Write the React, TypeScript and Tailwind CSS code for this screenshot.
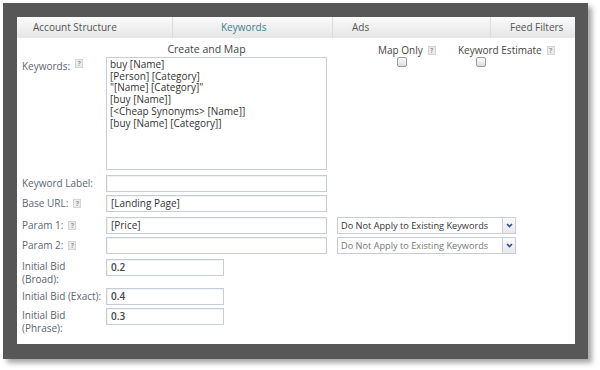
import React from "react";

const font = { fontFamily: '"Open Sans", "Liberation Sans", sans-serif' };

function Help() {
  return (
    <span className="ml-[5px] inline-flex h-[9px] w-[8px] items-center justify-center border border-[#d4d4d4] bg-[#ececec] text-[7px] font-bold leading-none text-[#999]">
      ?
    </span>
  );
}

function Check() {
  return (
    <span className="block h-[10px] w-[10px] rounded-[2px] border border-[#9a9a9a] bg-gradient-to-b from-[#ffffff] to-[#dcdcdc]" />
  );
}

function Field({ value, w = "w-[221px]", bold = false }: { value?: string; w?: string; bold?: boolean }) {
  return (
    <div
      className={`flex h-[17px] ${w} items-center border border-[#c6ccd8] bg-white px-[4px] shadow-[inset_1px_1px_1px_rgba(0,0,0,0.06)] ${
        bold ? "font-semibold text-[#444]" : "text-[#333]"
      }`}
    >
      {value}
    </div>
  );
}

function Select({ faded = false }: { faded?: boolean }) {
  return (
    <div className="ml-[10px] flex h-[17px] w-[179px] border border-[#c6ccd8] bg-white">
      <div
        className={`flex flex-1 items-center overflow-hidden whitespace-nowrap px-[3px] text-[9.2px] ${
          faded ? "text-[#777]" : "text-[#333]"
        }`}
      >
        Do Not Apply to Existing Keywords
      </div>
      <div className="flex w-[13px] items-center justify-center border-l border-[#c6ccd8] bg-gradient-to-b from-[#fafafa] to-[#e8e8e8]">
        <svg width="7" height="5" viewBox="0 0 7 5">
          <path d="M1 1l2.5 2.5L6 1" stroke="#2f4f8f" strokeWidth="1.6" fill="none" />
        </svg>
      </div>
    </div>
  );
}

function Label({ children }: { children: React.ReactNode }) {
  return <div className="flex w-[84px] shrink-0 items-center whitespace-nowrap text-[#5d6570]">{children}</div>;
}

export default function App() {
  const tabs = [
    { name: "Account Structure", w: "w-[155px]", pl: "pl-[16px]" },
    { name: "Keywords", w: "w-[160px]", pl: "pl-[48px]", active: true },
    { name: "Ads", w: "w-[158px]", pl: "pl-[19px]" },
    { name: "Feed Filters", w: "flex-1", pl: "pl-[19px]" },
  ];

  return (
    <div className="h-[370px] w-[600px] bg-white pl-[3px] pt-[3px] text-[10px]" style={font}>
      <div className="h-[356px] w-[585px] bg-[#575757] p-[14px] shadow-[4px_4px_5px_rgba(0,0,0,0.35)]">
        <div className="flex h-[327px] w-[558px] flex-col bg-white">
          <div className="flex h-[21px] bg-gradient-to-b from-[#fbfbfb] to-[#e5e5e5] text-[10px]">
            {tabs.map((t, i) => (
              <div
                key={t.name}
                className={`flex items-center whitespace-nowrap ${t.w} ${t.pl} ${i > 0 ? "border-l border-[#dcdcdc]" : ""} ${
                  t.active ? "text-[#3f7e8e]" : "text-[#555]"
                }`}
              >
                {t.name}
              </div>
            ))}
          </div>

          <div className="flex flex-col pl-[5px] pt-[5px]">
            <div className="flex items-start">
              <div className="flex flex-col">
                <div className="flex h-[14px] items-center">
                  <div className="w-[84px]" />
                  <div className="w-[221px] pr-[20px] text-center text-[10.5px] text-[#444]">Create and Map</div>
                </div>
                <div className="flex">
                  <div className="flex w-[84px] items-start pt-[2px] text-[#5d6570]">
                    Keywords:
                    <Help />
                  </div>
                  <div className="h-[113px] w-[221px] border border-[#c6ccd8] px-[3px] py-[1px] leading-[11.7px] text-[#333]">
                    buy [Name]
                    <br />
                    [Person] [Category]
                    <br />
                    "[Name] [Category]"
                    <br />
                    [buy [Name]]
                    <br />
                    [&lt;Cheap Synonyms&gt; [Name]]
                    <br />
                    [buy [Name] [Category]]
                  </div>
                </div>
              </div>
              <div className="ml-[51px] flex w-[80px] flex-col items-start text-[#444]">
                <div className="flex h-[14px] items-center">
                  Map Only
                  <Help />
                </div>
                <div className="ml-[19px]">
                  <Check />
                </div>
              </div>
              <div className="flex flex-col items-start text-[#444]">
                <div className="flex h-[14px] items-center">
                  Keyword Estimate
                  <Help />
                </div>
                <div className="ml-[18px]">
                  <Check />
                </div>
              </div>
            </div>

            <div className="mt-[5px] flex">
              <Label>Keyword Label:</Label>
              <Field />
            </div>
            <div className="mt-[3px] flex">
              <Label>
                Base URL:
                <Help />
              </Label>
              <Field value="[Landing Page]" />
            </div>
            <div className="mt-[5px] flex">
              <Label>
                Param 1:
                <Help />
              </Label>
              <Field value="[Price]" />
              <Select />
            </div>
            <div className="mt-[3px] flex">
              <Label>
                Param 2:
                <Help />
              </Label>
              <Field />
              <Select faded />
            </div>
            <div className="mt-[5px] flex items-start">
              <div className="w-[84px] shrink-0 pt-[1px] leading-[13px] text-[#5d6570]">
                Initial Bid
                <br />
                (Broad):
              </div>
              <Field value="0.2" w="w-[118px]" bold />
            </div>
            <div className="mt-[2px] flex">
              <Label>Initial Bid (Exact):</Label>
              <Field value="0.4" w="w-[118px]" bold />
            </div>
            <div className="mt-[3px] flex items-start">
              <div className="w-[84px] shrink-0 pt-[1px] leading-[13px] text-[#5d6570]">
                Initial Bid
                <br />
                (Phrase):
              </div>
              <Field value="0.3" w="w-[118px]" bold />
            </div>
          </div>
        </div>
      </div>
    </div>
  );
}
